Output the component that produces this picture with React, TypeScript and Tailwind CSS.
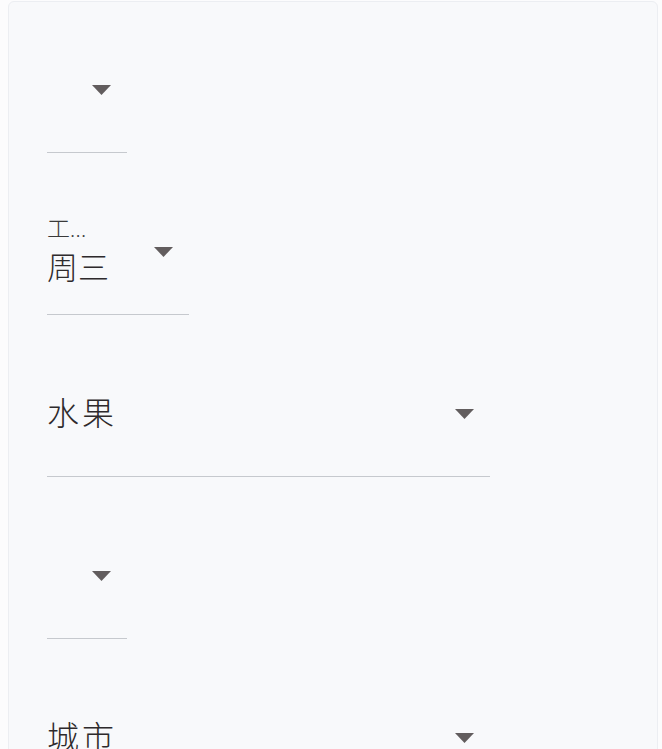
const Arrow = () => (
  <svg width="19" height="10" viewBox="0 0 19 10" className="mr-[16px] shrink-0">
    <path d="M0 0 L19 0 L9.5 10 Z" fill="#625d5e" />
  </svg>
);

type FieldProps = {
  width: string;
  label?: string;
  value?: string;
};

const SelectField = ({ width, label, value }: FieldProps) => {
  return (
    <div className={`flex h-[125px] items-center justify-between border-b border-[#c6c9ce] ${width}`}>
      {label ? (
        <div className="flex flex-col">
          <span className="text-[23px] leading-[24px] font-light text-[#3a3a3a]">{label}</span>
          <span className="mt-[9px] text-[31px] leading-[36px] font-light text-[#2e2a2c]">{value}</span>
        </div>
      ) : (
        <span className="text-[32px] leading-[36px] font-light tracking-[3px] text-[#2e2a2c]">{value}</span>
      )}
      <Arrow />
    </div>
  );
};

const App = () => {
  return (
    <div
      className="h-[749px] overflow-hidden bg-[#fcfcfd] pl-2 pr-1 pt-px"
      style={{ fontFamily: 'Roboto, "Noto Sans CJK SC", sans-serif' }}
    >
      <div className="flex min-h-[800px] flex-col gap-[37px] rounded-t-md border border-[#eceef2] bg-[#f8f9fb] pl-[38px] pt-[26px]">
        {/* empty select */}
        <SelectField width="w-[80px]" />
        {/* select with floating label */}
        <SelectField width="w-[142px]" label="工..." value="周三" />
        {/* wide select */}
        <SelectField width="w-[443px]" value="水果" />
        <SelectField width="w-[80px]" />
        <SelectField width="w-[443px]" value="城市" />
      </div>
    </div>
  );
};

export default App;
